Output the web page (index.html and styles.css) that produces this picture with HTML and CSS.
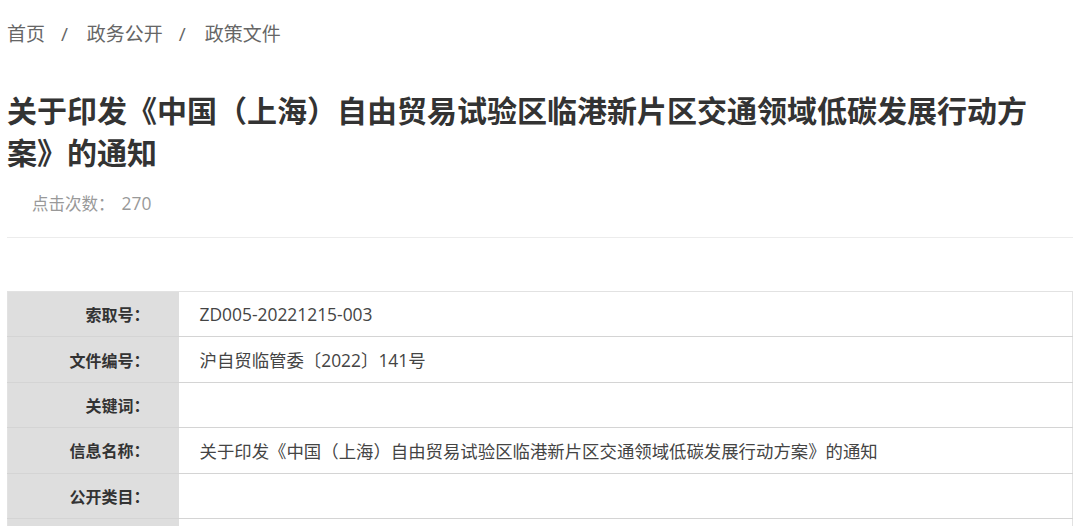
FILE: index.html
```html
<!DOCTYPE html>
<html lang="zh-CN">
<head>
    <meta charset="UTF-8">
    <meta name="viewport" content="width=device-width, initial-scale=1.0">
    <title>政策文件</title>
    <link rel="stylesheet" href="styles.css">
</head>
<body>
    <div class="page">
        <div class="breadcrumb">
            <a href="#">首页</a>
            <span class="sep">/</span>
            <a href="#">政务公开</a>
            <span class="sep">/</span>
            <a href="#">政策文件</a>
        </div>

        <h1 class="title">关于印发《中国（上海）自由贸易试验区临港新片区交通领域低碳发展行动方案》的通知</h1>
        <div class="meta">点击次数：<span class="count">270</span></div>

        <table class="info-table">
            <tr>
                <th>索取号：</th>
                <td>ZD005-20221215-003</td>
            </tr>
            <tr>
                <th>文件编号：</th>
                <td>沪自贸临管委〔2022〕141号</td>
            </tr>
            <tr>
                <th>关键词：</th>
                <td></td>
            </tr>
            <tr>
                <th>信息名称：</th>
                <td>关于印发《中国（上海）自由贸易试验区临港新片区交通领域低碳发展行动方案》的通知</td>
            </tr>
            <tr>
                <th>公开类目：</th>
                <td></td>
            </tr>
            <tr>
                <th>发布机构：</th>
                <td></td>
            </tr>
        </table>
    </div>
</body>
</html>
```

FILE: styles.css
```css
* {
    margin: 0;
    padding: 0;
    box-sizing: border-box;
}

body {
    font-family: "Open Sans", "Noto Sans CJK SC", sans-serif;
    color: #333;
    background: #fff;
    overflow: hidden;
}

.page {
    padding: 0 7px;
}

/* breadcrumb */
.breadcrumb {
    padding-top: 20px;
    font-size: 19px;
    line-height: 28px;
    color: #666;
}

.breadcrumb a {
    color: #666;
    text-decoration: none;
}

.breadcrumb .sep {
    margin: 0 14px 0 11px;
}

/* title */
.title {
    margin-top: 42px;
    padding-right: 40px;
    font-size: 30px;
    line-height: 42px;
    font-weight: 700;
    color: #333;
}

.meta {
    margin-top: 17px;
    padding: 0 23px 21px 25px;
    font-size: 16.5px;
    line-height: 24px;
    color: #999;
    border-bottom: 1px solid #ececec;
}

.meta .count {
    margin-left: 7px;
    font-size: 17.4px;
}

/* info table */
.info-table {
    width: 100%;
    margin-top: 53px;
    border-collapse: collapse;
    border: 1px solid #e2e2e2;
}

.info-table th,
.info-table td {
    height: 45.4px;
    border-bottom: 1px solid #d4d4d4;
    vertical-align: middle;
}

.info-table th {
    width: 171px;
    padding-right: 29px;
    text-align: right;
    font-size: 16px;
    font-weight: 700;
    color: #333;
    background: #dedede;
}

.info-table td {
    padding-left: 21px;
    font-size: 17.4px;
    color: #444;
}
```
